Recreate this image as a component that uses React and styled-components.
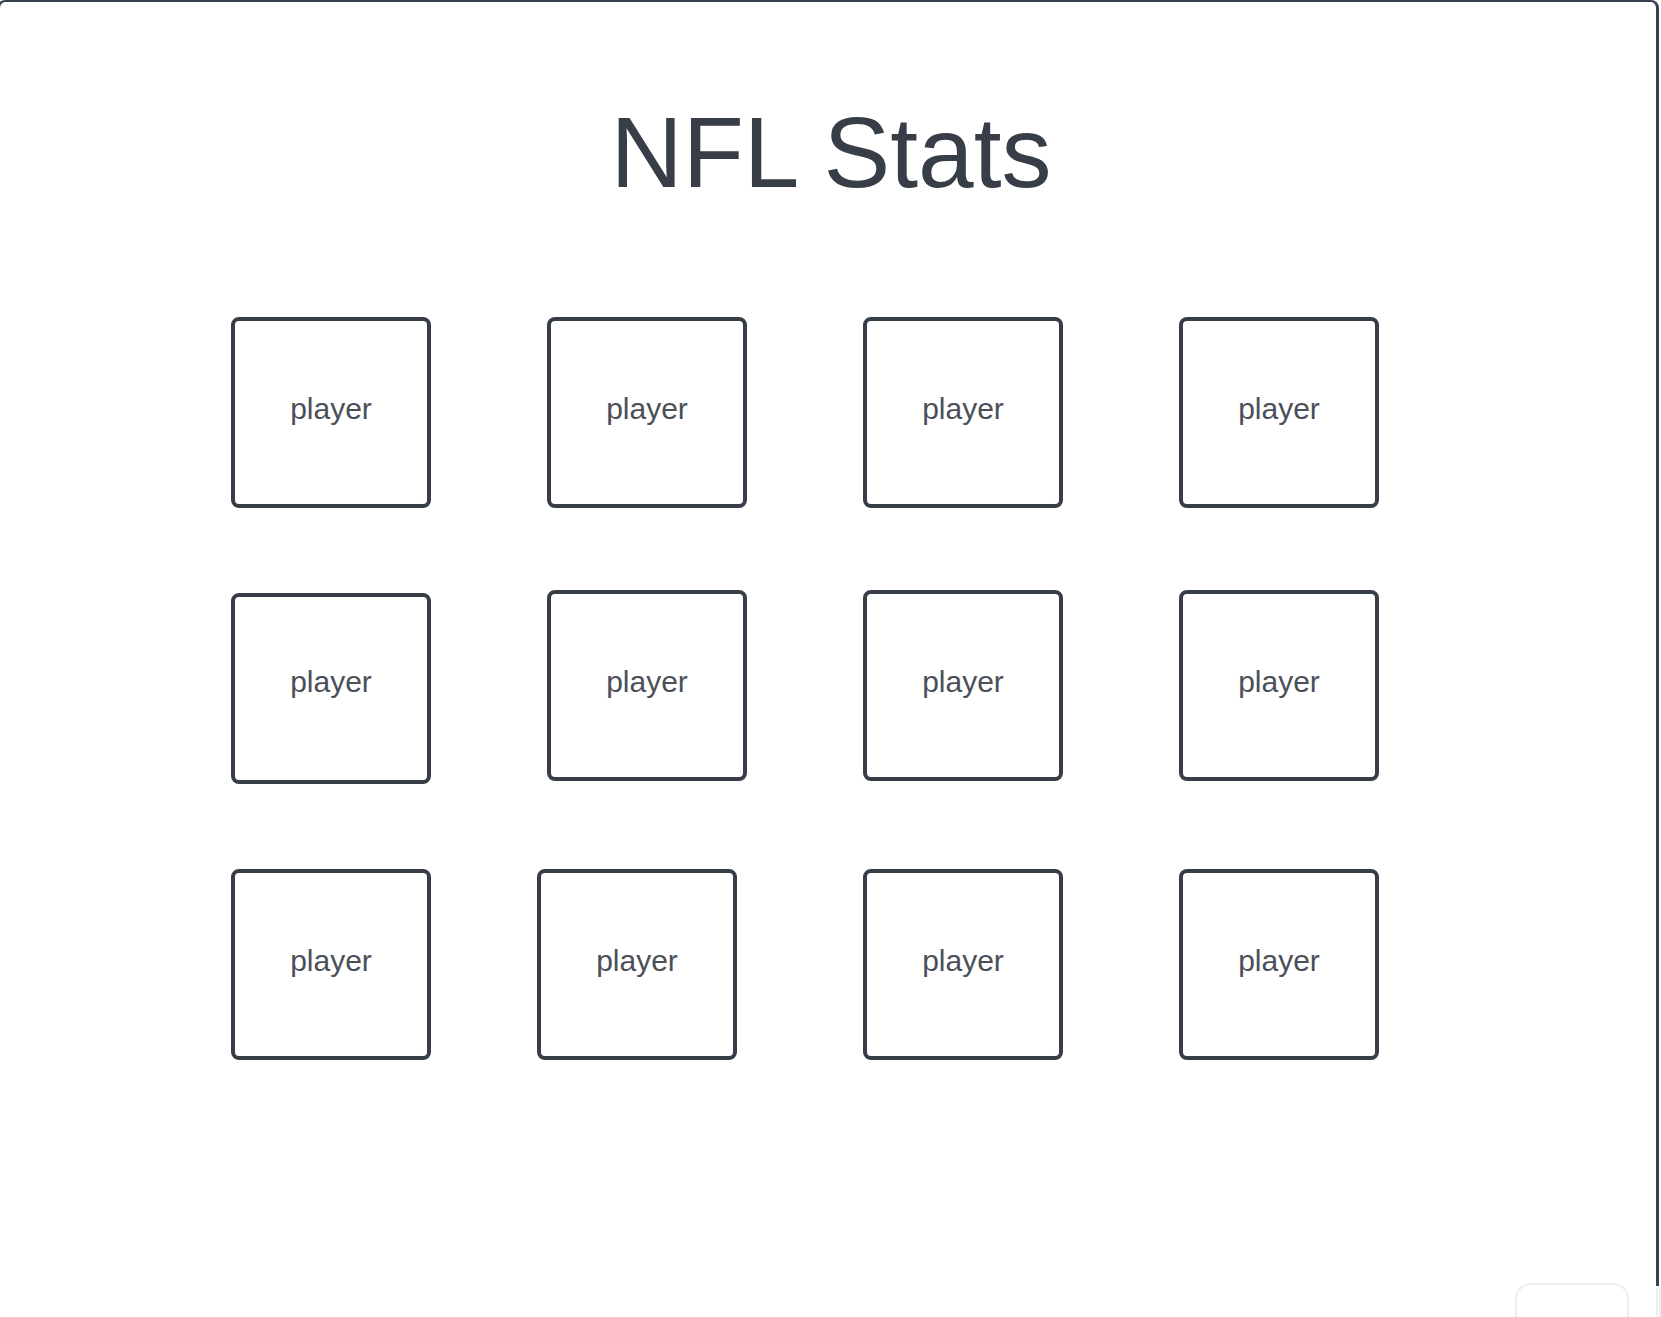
import React from "react"
import styled, { createGlobalStyle } from "styled-components"

const GlobalStyle = createGlobalStyle`
  html, body {
    margin: 0;
    padding: 0;
    background: #ffffff;
    overflow: hidden;
  }
  body {
    font-family: "Liberation Sans", Arial, sans-serif;
  }
`

const Page = styled.div`
  width: 1661px;
  height: 1317px;
  overflow: hidden;
`

const Frame = styled.div`
  box-sizing: border-box;
  width: 1662px;
  height: 1286px;
  margin-left: -3px;
  border: 3px solid #374151;
  border-top-width: 2px;
  border-bottom: none;
  border-radius: 8px 8px 0 0;
  display: flex;
  flex-direction: column;
`

const Title = styled.h1`
  margin: 95px 0 0;
  font-size: 100px;
  line-height: 110px;
  font-weight: 400;
  color: #373e47;
  text-align: center;
  transform: translateX(3px);
`

const Grid = styled.div`
  display: grid;
  grid-template-columns: repeat(4, 200px);
  column-gap: 116px;
  row-gap: 85px;
  margin: 110px 0 0 231px;
`

const Card = styled.div`
  box-sizing: border-box;
  width: 200px;
  height: 191px;
  border: 4px solid #373e47;
  border-radius: 8px;
  display: flex;
  align-items: center;
  justify-content: center;
  padding-bottom: ${p => 8 + (p.$lift || 0)}px;
  font-size: 30px;
  color: #4b5058;
  transform: translate(${p => p.$dx || 0}px, ${p => p.$dy || 0}px);
`

const Footer = styled.div`
  display: flex;
  justify-content: flex-end;
  gap: 27px;
  margin-top: -3px;
`

const Tab = styled.div`
  box-sizing: border-box;
  width: ${p => p.$width}px;
  height: 60px;
  margin-top: ${p => p.$top || 0}px;
  border: 2px solid #eeeeee;
  border-bottom: none;
  border-radius: 16px 16px 0 0;
`

const cards = [
  {}, {}, {}, {},
  { lift: 6 }, { dy: -3 }, { dy: -3 }, { dy: -3 },
  {}, { dx: -10 }, {}, {},
]

export default function App() {
  return (
    <Page>
      <GlobalStyle />
      <Frame>
        <Title>NFL Stats</Title>
        <Grid>
          {cards.map((c, i) => (
            <Card key={i} $dx={c.dx} $dy={c.dy} $lift={c.lift}>
              player
            </Card>
          ))}
        </Grid>
      </Frame>
      <Footer>
        <Tab $width={114} />
        <Tab $width={5} $top={4} />
      </Footer>
    </Page>
  )
}
